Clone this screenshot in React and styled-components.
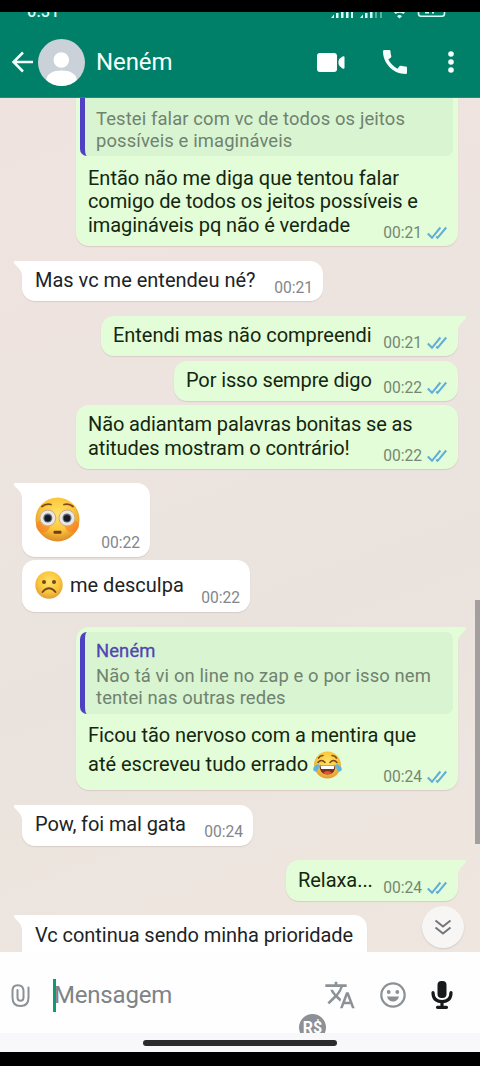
import React from "react";
import styled, { createGlobalStyle, css } from "styled-components";
import { MdCall, MdTranslate } from "react-icons/md";

const GlobalStyle = createGlobalStyle`
  * {
    box-sizing: border-box;
  }
  body {
    margin: 0;
    background: #000;
    font-family: Roboto, "Noto Sans", sans-serif;
  }
`;

const Screen = styled.div`
  width: 480px;
  height: 1066px;
  padding: 12px 0 14px;
  background: #000;
  display: flex;
  flex-direction: column;
  overflow: hidden;
`;

const Header = styled.header`
  height: 86px;
  flex: none;
  background: #008069;
  border-bottom: 1px solid #53776c;
  color: #f4fffd;
`;

const StatusBar = styled.div`
  height: 8px;
  padding: 0 34px 0 27px;
  overflow: hidden;
  display: flex;
  justify-content: space-between;
  align-items: flex-end;
`;

const Clock = styled.span`
  font-size: 16px;
  font-weight: 500;
  line-height: 16px;
  letter-spacing: 0.3px;
  color: #d9fff5;
`;

const StatusIcons = styled.svg`
  width: 115px;
  height: 8px;
  display: block;
`;

const Toolbar = styled.div`
  height: 84px;
  padding: 0 26px 0 11px;
  display: flex;
  align-items: center;
`;

const Icon = styled.svg`
  display: block;
  flex: none;
  width: ${props => props.w}px;
  height: ${props => props.h}px;
  margin-left: ${props => props.ml || 0}px;
`;

const CallIcon = styled(MdCall)`
  display: block;
  width: 32px;
  height: 32px;
  margin-left: 34px;
`;

const Name = styled.div`
  flex: 1;
  margin-left: 11px;
  font-size: 24px;
  line-height: 30px;
  letter-spacing: -0.1px;
`;

const Chat = styled.main`
  position: relative;
  height: 854px;
  flex: none;
  overflow: hidden;
  display: flex;
  flex-direction: column;
  padding: 0 22px;
  background: linear-gradient(160deg, #f0e3df 0%, #ede4df 35%, #eae3dd 60%, #efe6df 100%);
`;

const Bubble = styled.div`
  position: relative;
  flex: none;
  width: ${props => props.w}px;
  height: ${props => props.h}px;
  margin-top: ${props => props.mt}px;
  align-self: ${props => (props.out ? "flex-end" : "flex-start")};
  background: ${props => (props.out ? "#e2fdd7" : "#fff")};
  border-radius: 13px;
  box-shadow: 0 1px 1px rgba(110, 90, 80, 0.16);
  display: flex;
  flex-direction: column;
  justify-content: flex-end;
  padding: ${props => (props.out ? "0 11px 0 12px" : "0 10px 0 13px")};
  padding-bottom: ${props => props.pb || 9}px;
  color: ${props => (props.out ? "#14260f" : "#202326")};
  ${props =>
    props.tail &&
    (props.out
      ? css`
          border-top-right-radius: 0;
        `
      : css`
          border-top-left-radius: 0;
        `)}
  ${props =>
    props.cut &&
    css`
      border-top-left-radius: 0;
      border-top-right-radius: 0;
    `}
`;

const TailSvg = styled.svg`
  position: absolute;
  top: 0;
  width: 10px;
  height: 15px;
  ${props => (props.$out ? "right: -9px;" : "left: -9px; transform: scaleX(-1);")}
`;

const Quote = styled.div`
  height: ${props => props.h}px;
  margin: 0 -6px auto -8px;
  margin-top: ${props => props.mt || 0}px;
  border-left: 5px solid #4f40c4;
  border-radius: ${props => (props.cut ? "0 0 7px 7px" : "7px")};
  background: #d9f4d0;
  padding: ${props => props.pt}px 0 0 11px;
  font-size: 18.4px;
  letter-spacing: 0.12px;
  line-height: 22px;
  color: #6f8270;
  white-space: nowrap;
`;

const QuoteName = styled.div`
  color: #4f45b5;
  height: 26px;
  line-height: 24px;
  font-size: 18.4px;
  -webkit-text-stroke: 0.3px #4f45b5;
`;

const Line = styled.div`
  height: ${props => props.h || 23.4}px;
  font-size: 20px;
  line-height: ${props => props.h || 23.4}px;
  letter-spacing: ${props => props.ls || 0}px;
  white-space: nowrap;
  display: flex;
  align-items: center;
`;

const AfterEmoji = styled.span`
  margin-left: 7px;
`;

const Meta = styled.span`
  margin-left: auto;
  display: flex;
  align-items: center;
  gap: 5px;
  font-size: 15.6px;
  letter-spacing: 0;
  line-height: 20px;
  color: ${props => (props.out ? "#758772" : "#82868a")};
  transform: translateY(${props => props.drop || 8}px);
`;

const ScrollThumb = styled.div`
  position: absolute;
  right: 0;
  top: 502px;
  width: 5px;
  height: 244px;
  background: #a29f9e;
`;

const JumpButton = styled.button`
  position: absolute;
  left: 422px;
  top: 808px;
  width: 42px;
  height: 42px;
  border: 0;
  padding: 0;
  border-radius: 50%;
  background: #f8f6f5;
  box-shadow: 0 1px 2px rgba(0, 0, 0, 0.12);
  display: flex;
  align-items: center;
  justify-content: center;
`;

const Footer = styled.footer`
  height: 81px;
  flex: none;
  background: #fefefe;
`;

const Composer = styled.div`
  height: 62px;
  padding: 24px 27px 0 11px;
  display: flex;
  align-items: center;
  color: #8b9196;
`;

const Caret = styled.div`
  width: 3px;
  height: 33px;
  margin: 0 0 0 23px;
  background: #0b9b76;
`;

const Placeholder = styled.div`
  flex: 1;
  font-size: 24px;
  line-height: 30px;
  letter-spacing: -0.2px;
  color: #7d8388;
  margin-left: -2px;
`;

const TranslateIcon = styled(MdTranslate)`
  display: block;
  width: 32px;
  height: 32px;
`;

const BadgeRow = styled.div`
  height: 19px;
  overflow: hidden;
  padding-left: 299px;
`;

const PayBadge = styled.div`
  width: 27px;
  height: 27px;
  border-radius: 50%;
  background: #8b9197;
  color: #fff;
  font-size: 16px;
  font-weight: 700;
  line-height: 27px;
  text-align: center;
`;

const NavBar = styled.div`
  flex: 1;
  background: #f8f8fb;
  display: flex;
  justify-content: center;
  padding-top: 7px;
`;

const NavHandle = styled.div`
  width: 194px;
  height: 6px;
  border-radius: 3px;
  background: #2a2a2c;
`;

const Tail = ({ out }) => (
  <TailSvg viewBox="0 0 10 15" $out={out}>
    <path d="M0 0H7.5Q10 .3 8.8 2.6L3.5 8Q1.2 10.5 1 15H0Z" fill={out ? "#e2fdd7" : "#fff"} />
  </TailSvg>
);

// the short first stroke stays detached from the second tick
const Checks = () => (
  <Icon w={20} h={14} viewBox="0 0 20 14" fill="none" stroke="#63aed8" strokeWidth="2.1">
    <path d="M.8 7.6 5 11.8 13.4 1.5M9.2 10.5 10.6 11.8 19.2 1.5" />
  </Icon>
);

const Time = ({ out, drop, children }) => (
  <Meta out={out ? 1 : undefined} drop={drop}>
    {children}
    {out && <Checks />}
  </Meta>
);

const FaceGradient = ({ id, hot }) => (
  <defs>
    <radialGradient id={id} cx="50%" cy="38%" r="62%">
      <stop offset="0" stopColor="#ffe268" />
      <stop offset="0.6" stopColor="#fcc63b" />
      <stop offset="1" stopColor={hot} />
    </radialGradient>
  </defs>
);

const Flushed = () => (
  <Icon w={45} h={45} viewBox="0 0 45 45">
    <FaceGradient id="flushed" hot="#dc8a27" />
    <circle cx="22.5" cy="22.5" r="22" fill="url(#flushed)" />
    <ellipse cx="8" cy="29" rx="7" ry="6.5" fill="#fb7c20" opacity=".6" />
    <ellipse cx="37" cy="29" rx="7" ry="6.5" fill="#fb7c20" opacity=".6" />
    <circle cx="12.8" cy="21" r="8" fill="#ece6e0" stroke="#cda982" />
    <circle cx="32" cy="21" r="8" fill="#ece6e0" stroke="#cda982" />
    <circle cx="12.8" cy="21" r="4.5" fill="#58677a" />
    <circle cx="32" cy="21" r="4.5" fill="#58677a" />
    <circle cx="12.8" cy="21.3" r="3.2" fill="#171a24" />
    <circle cx="32" cy="21.3" r="3.2" fill="#171a24" />
    <path d="M7 9.5Q11 6 16 7.5M29 7.5Q34 6 38 9.5" fill="none" stroke="#7a4a1c" strokeWidth="1.8" strokeLinecap="round" />
    <rect x="18.5" y="33.7" width="8" height="3" rx="1.2" fill="#6d3d1c" />
  </Icon>
);

const Frown = () => (
  <Icon w={28} h={28} viewBox="0 0 28 28">
    <FaceGradient id="frown" hot="#e0a03a" />
    <circle cx="14" cy="14" r="13.7" fill="url(#frown)" />
    <ellipse cx="9" cy="11" rx="2" ry="2" fill="#6d4a1f" />
    <ellipse cx="19" cy="11" rx="2" ry="2" fill="#6d4a1f" />
    <path d="M7.5 21Q14 13.5 20.5 21" fill="none" stroke="#6d4a1f" strokeWidth="1.8" strokeLinecap="round" />
  </Icon>
);

const Joy = () => (
  <Icon w={29} h={28} ml={5} viewBox="0 0 29 28">
    <FaceGradient id="joy" hot="#e39a36" />
    <circle cx="14.5" cy="14" r="13.4" fill="url(#joy)" />
    <path d="M5 11.5Q8.5 7.5 12 11.5M17 11.5Q20.5 7.5 24 11.5M5.5 7Q7 4.5 10 4.5M19 4.5Q22 4.5 23.5 7" fill="none" stroke="#754a1d" strokeWidth="1.5" strokeLinecap="round" />
    <path d="M6.5 14.5H22.5Q22.5 23.5 14.5 23.5 6.5 23.5 6.5 14.5Z" fill="#74321f" />
    <path d="M7.5 14.8H21.5L20.8 18H8.2Z" fill="#fff" />
    <path d="M10 22Q14.5 17.8 19 22Q14.5 24.5 10 22Z" fill="#e5533d" />
    <path d="M5.8 13Q6.5 19.5 2.8 20.5 0 20.5 .3 17.5 1 14.5 5.8 13Z" fill="#58b7e2" />
    <path d="M23.2 13Q22.5 19.5 26.2 20.5 29 20.5 28.7 17.5 28 14.5 23.2 13Z" fill="#58b7e2" />
  </Icon>
);

const Avatar = () => (
  <Icon w={47} h={47} ml={4} viewBox="0 0 47 47">
    <clipPath id="avatar">
      <circle cx="23.5" cy="23.5" r="23.5" />
    </clipPath>
    <g clipPath="url(#avatar)">
      <path d="M0 0h47v47H0z" fill="#cbd1d9" />
      <circle cx="23.3" cy="21" r="7.8" fill="#fff" />
      <path d="M8 47V41Q10 31.5 23.5 31.5T39 41V47Z" fill="#fff" />
    </g>
  </Icon>
);

const App = () => (
  <Screen>
    <GlobalStyle />
    <Header>
      <StatusBar>
        <Clock>6:31</Clock>
        <StatusIcons viewBox="0 0 115 8" fill="#d5fff4">
          <path d="M0 6L3 2.5V6ZM5 1h2.5v5H5zM10 0h2.5v6H10zM15 0h2.5v6H15zM20 0h2v6h-2zM29 6l3-3.5V6zM34 1h2.5v5H34zM39 0h2.5v6H39z" />
          <path d="M44 0h2v6h-2zM49 0h2v6h-2z" opacity=".4" />
          <path d="M63 0Q68.5-2.5 74 0L72.5 2Q68.5-.5 64.5 2ZM66 4.2Q68.5 2 71 4.2L68.5 6.5Z" />
          <path d="M87.5 0V1.5Q87.5 4.2 90 4.2H111Q113.5 4.2 113.5 1.5V0" fill="none" stroke="#d5fff4" strokeWidth="1.6" />
          <path d="M94 0h4v1.5h-4zM101 0h2v1.5h-2z" />
        </StatusIcons>
      </StatusBar>
      <Toolbar>
        <Icon w={23} h={22} viewBox="0 0 23 22" fill="none" stroke="#f4fffd" strokeWidth="2.5">
          <path d="M22 11H2.5M12 1.5 2.5 11 12 20.5" />
        </Icon>
        <Avatar />
        <Name>Neném</Name>
        <Icon w={28} h={19} viewBox="0 0 28 19" fill="#fff">
          <rect width="20" height="19" rx="3" />
          <path d="M21.5 8Q22 5.5 25.5 3.5 27.5 2.5 27.5 4.5V14.5Q27.5 16.5 25.5 15.5 22 13.5 21.5 11Z" />
        </Icon>
        <CallIcon />
        <Icon w={6} h={22} ml={37} viewBox="0 0 6 22" fill="#f4fffd">
          <circle cx="3" cy="3" r="2.8" />
          <circle cx="3" cy="11" r="2.8" />
          <circle cx="3" cy="19" r="2.8" />
        </Icon>
      </Toolbar>
    </Header>

    <Chat>
      <Bubble out w={382} h={148} mt={0} pb={9} cut>
        <Quote h={58} pt={10} cut>
          <div>Testei falar com vc de todos os jeitos</div>
          <div>possíveis e imagináveis</div>
        </Quote>
        <Line>Então não me diga que tentou falar</Line>
        <Line ls={-0.1}>comigo de todos os jeitos possíveis e</Line>
        <Line ls={-0.06}>
          imagináveis pq não é verdade
          <Time out>00:21</Time>
        </Line>
      </Bubble>
      <Bubble w={301} h={40} mt={15} tail>
        <Tail />
        <Line>
          Mas vc me entendeu né?
          <Time>00:21</Time>
        </Line>
      </Bubble>
      <Bubble out w={357} h={40} mt={15} tail>
        <Tail out />
        <Line ls={-0.03}>
          Entendi mas não compreendi
          <Time out>00:21</Time>
        </Line>
      </Bubble>
      <Bubble out w={284} h={40} mt={5}>
        <Line ls={-0.12}>
          Por isso sempre digo
          <Time out>00:22</Time>
        </Line>
      </Bubble>
      <Bubble out w={382} h={64} mt={4}>
        <Line ls={-0.12}>Não adiantam palavras bonitas se as</Line>
        <Line ls={-0.08}>
          atitudes mostram o contrário!
          <Time out>00:22</Time>
        </Line>
      </Bubble>
      <Bubble w={128} h={74} mt={14} pb={14} tail>
        <Tail />
        <Line h={47}>
          <Flushed />
          <Time drop={23}>00:22</Time>
        </Line>
      </Bubble>
      <Bubble w={228} h={52} mt={3} pb={13}>
        <Line h={28}>
          <Frown />
          <AfterEmoji>me desculpa</AfterEmoji>
          <Time drop={13}>00:22</Time>
        </Line>
      </Bubble>
      <Bubble out w={382} h={163} mt={15} pb={11} tail>
        <Tail out />
        <Quote h={82} mt={5} pt={7}>
          <QuoteName>Neném</QuoteName>
          <div>Não tá vi on line no zap e o por isso nem</div>
          <div>tentei nas outras redes</div>
        </Quote>
        <Line h={29} ls={-0.05}>
          Ficou tão nervoso com a mentira que
        </Line>
        <Line h={29}>
          até escreveu tudo errado
          <Joy />
          <Time out drop={12}>00:24</Time>
        </Line>
      </Bubble>
      <Bubble w={231} h={41} mt={15} pb={10} tail>
        <Tail />
        <Line ls={-0.1}>
          Pow, foi mal gata
          <Time>00:24</Time>
        </Line>
      </Bubble>
      <Bubble out w={172} h={41} mt={14} pb={9} tail>
        <Tail out />
        <Line ls={-0.05}>
          Relaxa...
          <Time out>00:24</Time>
        </Line>
      </Bubble>
      <Bubble w={345} h={64} mt={14} pb={32} tail>
        <Tail />
        <Line ls={-0.05}>Vc continua sendo minha prioridade</Line>
      </Bubble>
      <ScrollThumb />
      <JumpButton>
        <Icon w={18} h={17} viewBox="0 0 18 17" fill="none" stroke="#727679" strokeWidth="2">
          <path d="M1.5 1.5 9 7.5 16.5 1.5M1.5 8.5 9 14.5 16.5 8.5" />
        </Icon>
      </JumpButton>
    </Chat>

    <Footer>
      <Composer>
        <Icon w={19} h={23} viewBox="0 0 19 23" fill="none" stroke="#8b9196" strokeWidth="2" strokeLinecap="round">
          <path d="M17.5 3.5V13.5Q17.5 22 9.5 22T1.5 13.5V6.5Q1.5 1.2 6.8 1.2T12.5 6.5V13.5Q12.5 16.7 9.5 16.7T6.5 13.5V6" />
        </Icon>
        <Caret />
        <Placeholder>Mensagem</Placeholder>
        <TranslateIcon />
        <Icon w={26} h={26} ml={24} viewBox="0 0 26 26" fill="#8b9196">
          <circle cx="13" cy="13" r="11.7" fill="none" stroke="#8b9196" strokeWidth="2.2" />
          <circle cx="8.7" cy="10" r="1.9" />
          <circle cx="17.3" cy="10" r="1.9" />
          <path d="M7 14.5H19Q17.5 19.5 13 19.5T7 14.5Z" />
        </Icon>
        <Icon w={22} h={28} ml={25} viewBox="0 0 22 28" fill="#17191b">
          <rect x="6.5" y="0" width="9" height="17" rx="4" />
          <path d="M2 11.5Q2 20.5 11 20.5T20 11.5M11 21V26M6.5 26.3H15.5" fill="none" stroke="#17191b" strokeWidth="3.2" strokeLinecap="round" />
        </Icon>
      </Composer>
      <BadgeRow>
        <PayBadge>R$</PayBadge>
      </BadgeRow>
    </Footer>
    <NavBar>
      <NavHandle />
    </NavBar>
  </Screen>
);

export default App;
